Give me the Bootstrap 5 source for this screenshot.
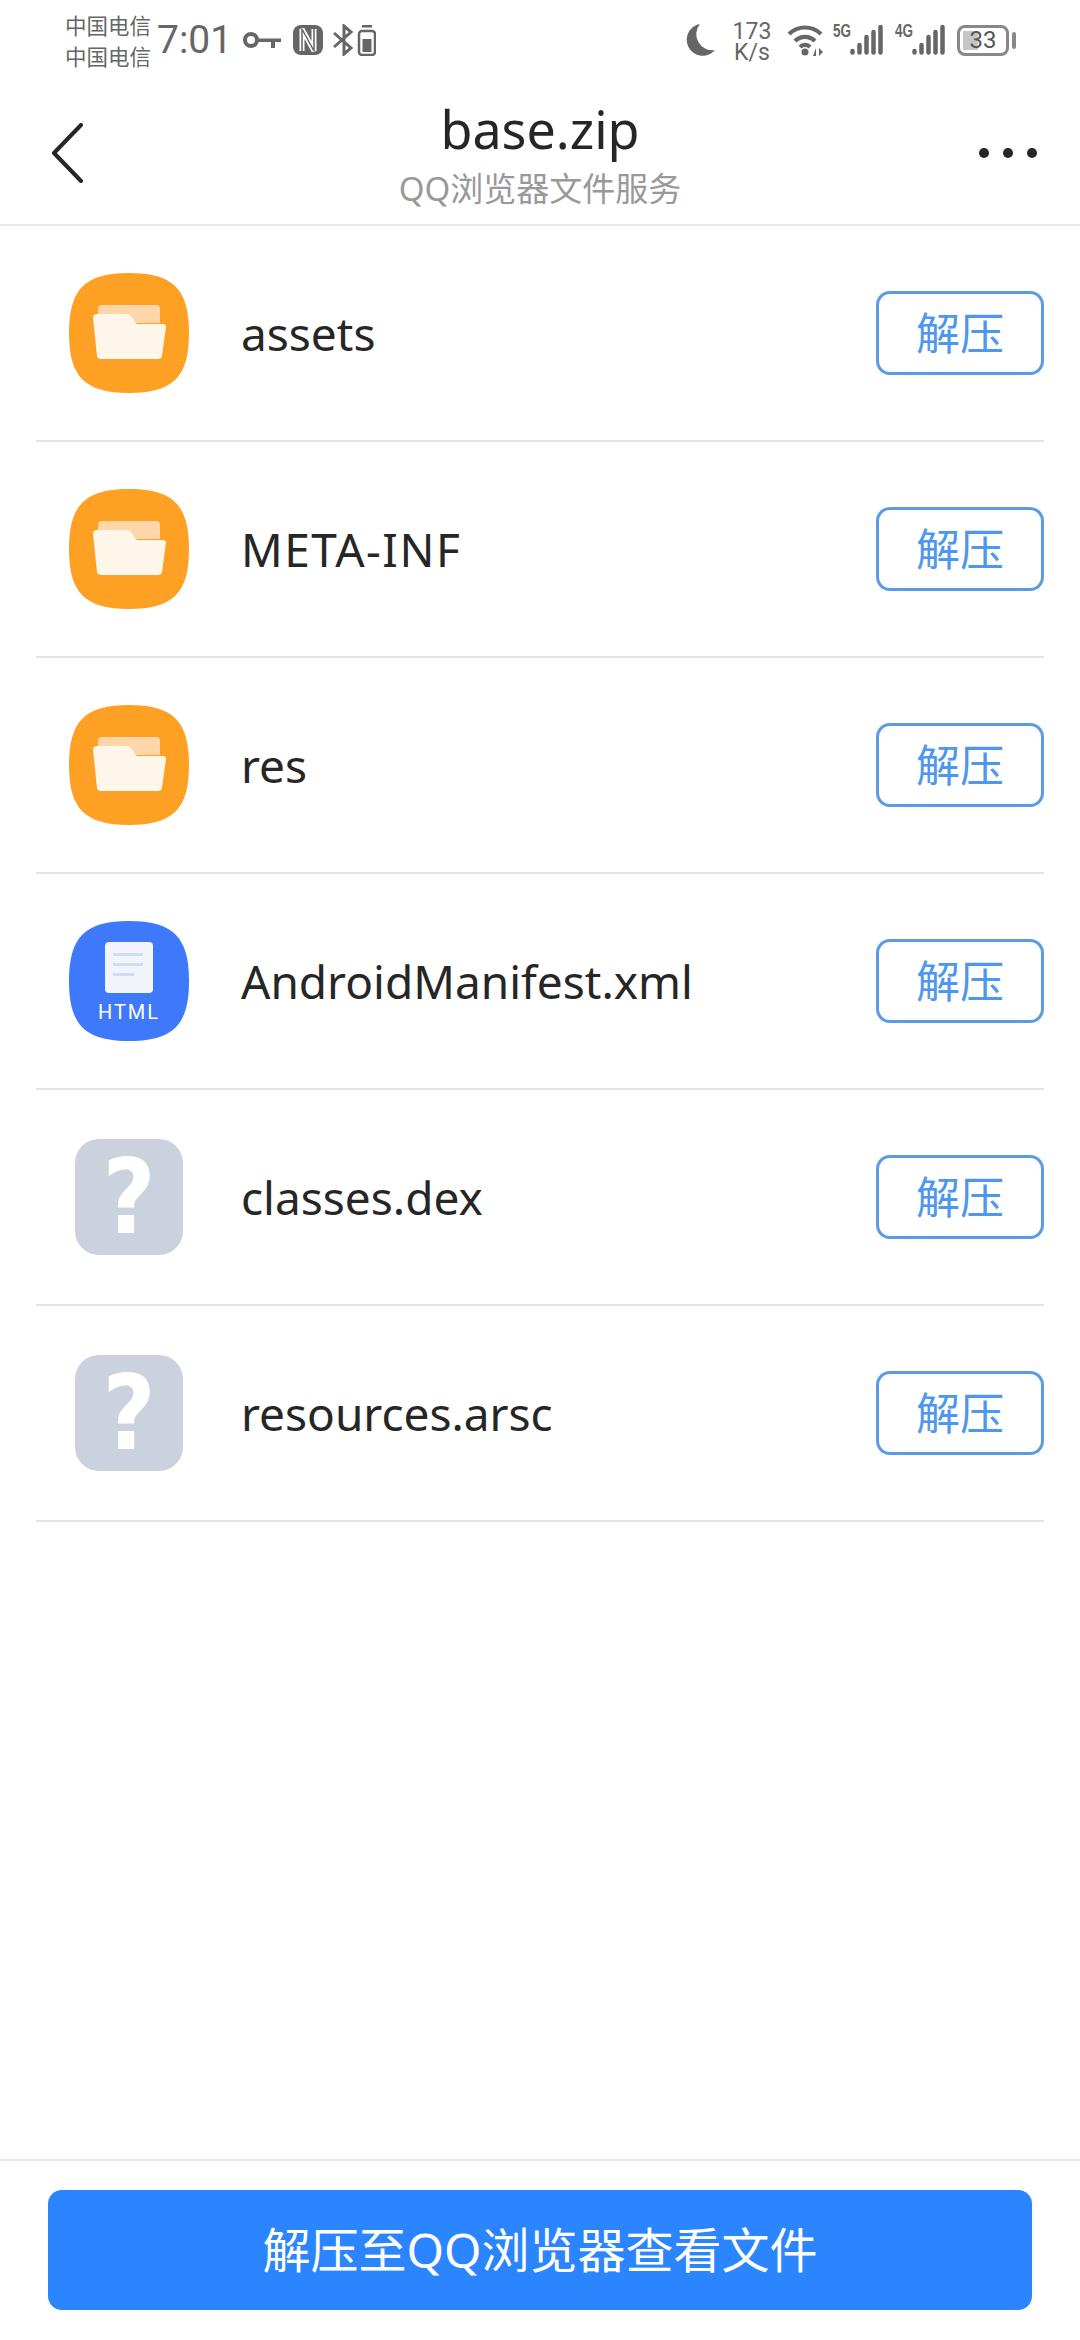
<!DOCTYPE html>
<html lang="zh-CN">

<head>
    <meta charset="UTF-8">
    <meta name="viewport" content="width=device-width, initial-scale=1.0">
    <title>base.zip</title>
    <link href="https://cdn.jsdelivr.net/npm/bootstrap@5.3.0/dist/css/bootstrap.min.css" rel="stylesheet">
    <style>
        body {
            width: 1080px;
            height: 2340px;
            overflow: hidden;
            background: #fff;
            font-family: "Noto Sans", "Noto Sans CJK SC", sans-serif;
            color: #262626;
        }

        /* status bar */
        .status-row { height: 76px; padding-left: 65px; padding-top: 10px; padding-right: 64px; color: #666; }
        .st-ico { margin-top: 14px; flex-shrink: 0; }
        .st-gap { margin-left: 12px; }
        .st-gap-sm { margin-left: 10px; }
        .carrier { width: 92px; font-size: 21.5px; line-height: 31px; }
        .clock { width: 86px; font-family: Roboto, sans-serif; font-size: 39px; line-height: 48px; margin-top: 6px; }
        .speed { width: 44px; margin: 11px 13px 0 15px; font-family: Roboto, sans-serif; font-size: 23px; line-height: 21px; text-align: center; }
        .net-tag { font-family: "Liberation Sans", sans-serif; font-weight: 700; font-size: 18px; line-height: 15px; width: 17px; margin-top: 14px; transform: scaleX(.75); transform-origin: left; white-space: nowrap; }
        .batt { width: 52px; height: 31px; border: 3px solid #888; border-radius: 8px; margin-left: 12px; margin-top: 15px; font-family: Roboto, sans-serif; font-size: 24px; line-height: 25px; color: #555; text-align: center; background: linear-gradient(90deg, #c6c6c6 15px, transparent 15px) 3px 3px / calc(100% - 6px) calc(100% - 6px) no-repeat; }
        .batt-nub { width: 4px; height: 17px; margin-left: 3px; margin-top: 22px; border-radius: 2px; background: #888; }

        /* title bar */
        .title-bar { height: 150px; border-bottom: 2px solid #e8e8e8; }
        .back-btn { left: 51px; top: 47px; }
        .more-btn { left: 979px; top: 72px; }
        .title-wrap { padding-top: 23px; }
        .title-main { font-size: 52px; line-height: 60px; }
        .title-sub { font-size: 33px; line-height: 42px; margin-top: 9px; color: #999; }

        /* file rows */
        .file-row { height: 216px; margin: 0 36px; border-bottom: 2px solid #e4e4e4; }
        .file-icon { width: 120px; height: 120px; margin-left: 33px; }
        .file-name { margin-left: 52px; font-size: 46px; color: #262626; }
        .name-caps { letter-spacing: 1.5px; }
        .btn-unzip { width: 168px; height: 84px; padding: 0; border: 3px solid #5b9be6; border-radius: 14px; background: #fff; color: #4e97ec; font-size: 44px; line-height: 72px; }
        .unknown-icon { width: 108px; height: 116px; margin: 0 6px; border-radius: 24px; background: #cbd2de; color: #fff; font-family: "DejaVu Sans", sans-serif; font-weight: 700; font-size: 104px; line-height: 116px; text-align: center; }
        .unknown-mark { display: inline-block; transform: scaleX(.88); }
        .html-label { left: 0; right: 0; top: 80px; font-family: Roboto, sans-serif; font-weight: 400; font-size: 20px; line-height: 22px; letter-spacing: 2px; color: #fff; text-align: center; }

        /* bottom bar */
        .bottom-bar { height: 181px; border-top: 2px solid #e8e8e8; padding: 29px 48px 0; }
        .btn-open { width: 984px; height: 120px; border: 0; border-radius: 14px; background: #2a85ff; color: #fff; font-size: 48px; }
    </style>
</head>

<body class="d-flex flex-column">
    <svg width="0" height="0" class="position-absolute">
        <symbol id="folder-icon" viewBox="0 0 120 120">
            <path d="M60 0C104 0 120 16 120 60C120 104 104 120 60 120C16 120 0 104 0 60C0 16 16 0 60 0Z" fill="#fea023"/>
            <path d="M29 36a4 4 0 0 1 4-4h54a4 4 0 0 1 4 4v14H29Z" fill="#fdd6a9"/>
            <path d="M24 45a4 4 0 0 1 4-4h30a5 5 0 0 1 4 2l4 6a3 3 0 0 0 3 2h25a3 3 0 0 1 3 3l-4 29a4 4 0 0 1-4 3H32a4 4 0 0 1-4-3Z" fill="#fff6ea"/>
        </symbol>
        <symbol id="bars-icon" viewBox="0 0 33 31">
            <path d="M2.500 27v1.500M9.500 21v7.500M16.500 13v15.500M23.500 8v20.500M30.500 3v25.500" fill="none" stroke="#666" stroke-width="4.500" stroke-linecap="round"/>
        </symbol>
    </svg>

    <!-- status bar -->
    <div class="status-row d-flex flex-shrink-0">
        <div class="carrier"><div>中国电信</div><div>中国电信</div></div>
        <div class="clock">7:01</div>
        <svg width="38" height="32" viewBox="0 0 38 32" class="st-ico">
            <circle cx="8" cy="16" r="6" fill="none" stroke="#666" stroke-width="4"/>
            <path d="M14 14.500h24v3.500h-6v6h-4v-6H14Z" fill="#666"/>
        </svg>
        <svg width="30" height="32" viewBox="0 0 30 32" class="st-ico st-gap">
            <rect y="1" width="30" height="30" rx="8" fill="#666"/>
            <path d="M9 27V5l12 22V5" fill="none" stroke="#fff" stroke-width="5"/>
            <path d="M9 27V5l12 22V5" fill="none" stroke="#666" stroke-width="1.500"/>
        </svg>
        <svg width="43" height="32" viewBox="0 0 43 32" class="st-ico st-gap-sm">
            <path d="M1 9l17 15-7 6V2l7 6L1 23" fill="none" stroke="#666" stroke-width="3"/>
            <rect x="26" y="7" width="16" height="24" rx="3" fill="none" stroke="#666" stroke-width="2.500"/>
            <rect x="29.500" y="15" width="9" height="13" fill="#666"/>
            <rect x="29" y="1" width="10" height="2.500" fill="#666"/>
        </svg>
        <svg width="30" height="32" viewBox="0 0 30 32" class="st-ico ms-auto">
            <path d="M15 0A16 16 0 0 0 30 26A16 16 0 1 1 15 0Z" fill="#666"/>
        </svg>
        <div class="speed">173<br>K/s</div>
        <svg width="38" height="32" viewBox="0 0 38 32" class="st-ico">
            <path d="M2 10a23 23 0 0 1 32 0M8 17a14 14 0 0 1 20 0M13 23a7 7 0 0 1 10 0" fill="none" stroke="#666" stroke-width="4.200"/>
            <circle cx="18" cy="28" r="3.500" fill="#666"/>
            <path d="M29 24v8h-3ZM32 24v8l4-4Z" fill="#666"/>
        </svg>
        <div class="net-tag ms-2">5G</div>
        <svg width="33" height="31" class="st-ico"><use href="#bars-icon"/></svg>
        <div class="net-tag st-gap">4G</div>
        <svg width="33" height="31" class="st-ico"><use href="#bars-icon"/></svg>
        <div class="batt">33</div>
        <div class="batt-nub"></div>
    </div>

    <!-- title bar -->
    <div class="title-bar position-relative flex-shrink-0">
        <svg class="back-btn position-absolute" width="32" height="60" viewBox="0 0 32 60">
            <path d="M30 2L3 30l27 28" fill="none" stroke="#262626" stroke-width="4" stroke-linecap="round" stroke-linejoin="round"/>
        </svg>
        <div class="title-wrap text-center">
            <div class="title-main">base.zip</div>
            <div class="title-sub">QQ浏览器文件服务</div>
        </div>
        <svg class="more-btn position-absolute" width="60" height="10" viewBox="0 0 60 10">
            <circle cx="5" cy="5" r="5" fill="#262626"/>
            <circle cx="29" cy="5" r="5" fill="#262626"/>
            <circle cx="53" cy="5" r="5" fill="#262626"/>
        </svg>
    </div>

    <!-- file list -->
    <div class="flex-grow-1">
        <div class="file-row d-flex align-items-center">
            <svg class="file-icon"><use href="#folder-icon"/></svg>
            <div class="file-name">assets</div>
            <button class="btn btn-unzip ms-auto">解压</button>
        </div>
        <div class="file-row d-flex align-items-center">
            <svg class="file-icon"><use href="#folder-icon"/></svg>
            <div class="file-name name-caps">META-INF</div>
            <button class="btn btn-unzip ms-auto">解压</button>
        </div>
        <div class="file-row d-flex align-items-center">
            <svg class="file-icon"><use href="#folder-icon"/></svg>
            <div class="file-name">res</div>
            <button class="btn btn-unzip ms-auto">解压</button>
        </div>
        <div class="file-row d-flex align-items-center">
            <div class="file-icon position-relative">
                <svg width="120" height="120" viewBox="0 0 120 120" class="d-block">
                    <path d="M60 0C104 0 120 16 120 60C120 104 104 120 60 120C16 120 0 104 0 60C0 16 16 0 60 0Z" fill="#3e78fb"/>
                    <rect x="36" y="21" width="48" height="51" rx="4" fill="#f1f4fa"/>
                    <path d="M44 32h30v3H44ZM44 42h30v3H44ZM44 52h21v3H44Z" fill="#cfdcf9"/>
                </svg>
                <div class="html-label position-absolute">HTML</div>
            </div>
            <div class="file-name">AndroidManifest.xml</div>
            <button class="btn btn-unzip ms-auto">解压</button>
        </div>
        <div class="file-row d-flex align-items-center">
            <div class="file-icon d-flex align-items-center"><div class="unknown-icon"><span class="unknown-mark">?</span></div></div>
            <div class="file-name">classes.dex</div>
            <button class="btn btn-unzip ms-auto">解压</button>
        </div>
        <div class="file-row d-flex align-items-center">
            <div class="file-icon d-flex align-items-center"><div class="unknown-icon"><span class="unknown-mark">?</span></div></div>
            <div class="file-name">resources.arsc</div>
            <button class="btn btn-unzip ms-auto">解压</button>
        </div>
    </div>

    <!-- bottom button -->
    <div class="bottom-bar flex-shrink-0">
        <button class="btn btn-open">解压至QQ浏览器查看文件</button>
    </div>

    <script src="https://cdn.jsdelivr.net/npm/bootstrap@5.3.0/dist/js/bootstrap.bundle.min.js"></script>
</body>

</html>
